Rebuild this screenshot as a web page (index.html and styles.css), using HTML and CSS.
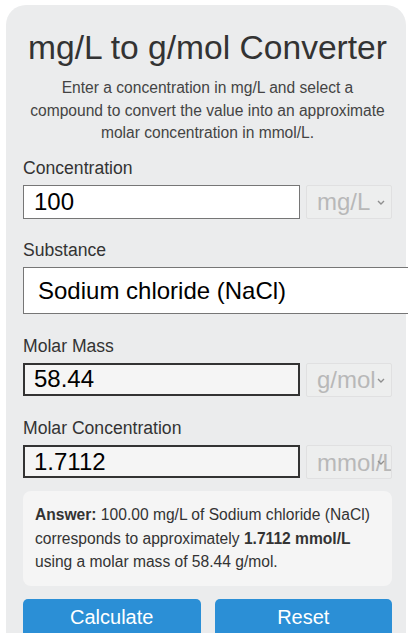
FILE: index.html
```html
<!DOCTYPE html>
<html lang="en">
<head>
<meta charset="UTF-8">
<meta name="viewport" content="width=device-width, initial-scale=1.0">
<title>mg/L to g/mol Converter</title>
<link rel="stylesheet" href="styles.css">
</head>
<body>
<div class="container">
    <h1>mg/L to g/mol Converter</h1>
    <p class="intro">Enter a concentration in mg/L and select a compound to convert the value into an approximate molar concentration in mmol/L.</p>

    <div class="field">
        <label for="concentration">Concentration</label>
        <div class="row">
            <input type="text" id="concentration" value="100">
            <div class="unit-wrap">
                <select class="unit" disabled><option>mg/L</option></select>
                <svg class="chev" width="8" height="5" viewBox="0 0 8 5"><path d="M1 1l3 3 3-3" fill="none" stroke="#8f8f8f" stroke-width="1.4"/></svg>
            </div>
        </div>
    </div>

    <div class="field">
        <label for="substance">Substance</label>
        <select id="substance" class="substance">
            <option>Sodium chloride (NaCl)</option>
            <option>Potassium chloride (KCl)</option>
            <option>Glucose (C6H12O6)</option>
        </select>
    </div>

    <div class="field">
        <label for="molarMass">Molar Mass</label>
        <div class="row">
            <input type="text" id="molarMass" class="readonly" value="58.44" readonly>
            <div class="unit-wrap">
                <select class="unit" disabled><option>g/mol</option></select>
                <svg class="chev" width="8" height="5" viewBox="0 0 8 5"><path d="M1 1l3 3 3-3" fill="none" stroke="#8f8f8f" stroke-width="1.4"/></svg>
            </div>
        </div>
    </div>

    <div class="field">
        <label for="molarConc">Molar Concentration</label>
        <div class="row">
            <input type="text" id="molarConc" class="readonly" value="1.7112" readonly>
            <div class="unit-wrap">
                <select class="unit" disabled><option>mmol/L</option></select>
                <svg class="chev" width="8" height="5" viewBox="0 0 8 5"><path d="M1 1l3 3 3-3" fill="none" stroke="#8f8f8f" stroke-width="1.4"/></svg>
            </div>
        </div>
    </div>

    <div class="answer">
        <p><strong>Answer:</strong> 100.00 mg/L of Sodium chloride (NaCl) corresponds to approximately <strong>1.7112 mmol/L</strong> using a molar mass of 58.44 g/mol.</p>
    </div>

    <div class="buttons">
        <button type="button">Calculate</button>
        <button type="button">Reset</button>
    </div>
</div>
</body>
</html>
```

FILE: styles.css
```css
html, body { overflow-x: hidden; }
body {
    margin: 0;
    background: #fff;
    font-family: "Liberation Sans", Arial, sans-serif;
    color: #333;
}
.container {
    box-sizing: border-box;
    width: 400px;
    margin: 5px 0 0 6px;
    padding: 24px 14px 40px 17px;
    background: #ebeced;
    border-radius: 20px;
}
h1 {
    margin: 0;
    font-size: 33.6px;
    font-weight: normal;
    text-align: center;
    color: #333;
}
.intro {
    margin: 10px 5px 0;
    font-size: 15.6px;
    line-height: 22.5px;
    text-align: center;
    color: #444;
}
.field { margin-top: 13px; }
.field + .field { margin-top: 21.5px; }
label {
    display: block;
    margin-bottom: 6px;
    font-size: 17.6px;
    color: #333;
}
.row { display: flex; gap: 6px; }
input {
    box-sizing: border-box;
    flex: 1;
    min-width: 0;
    height: 34px;
    padding: 0 10px;
    border: 1px solid #767676;
    background: #fff;
    font-family: inherit;
    font-size: 24px;
    color: #000;
}
input.readonly {
    height: 33px;
    border: 2px solid #333;
    background: #f5f5f5;
    padding: 0 9px;
}
.unit-wrap { position: relative; flex: 0 0 86px; }
.unit {
    box-sizing: border-box;
    width: 86px;
    height: 34px;
    padding: 0 0 0 10px;
    border: 1px solid #dcdcdc;
    border-radius: 2px;
    background: #efefef;
    font-family: inherit;
    font-size: 24px;
    color: #a3a3a3;
    appearance: none;
    -webkit-appearance: none;
}
.chev { position: absolute; right: 7px; top: 15px; }
.substance {
    box-sizing: border-box;
    width: 400px;
    height: 47px;
    padding: 0 10px;
    border: 1px solid #767676;
    background: #fff;
    font-family: inherit;
    font-size: 24px;
    color: #000;
}
.answer {
    margin-top: 12px;
    padding: 12px;
    background: #f5f5f5;
    border-radius: 8px;
    color: #333;
}
.answer p {
    margin: 0;
    font-size: 15.6px;
    line-height: 23.5px;
}
.buttons { display: flex; gap: 14px; margin-top: 13px; }
button {
    flex: 1;
    padding: 7px 0 12px;
    border: none;
    border-radius: 5px;
    background: #2b8fd6;
    color: #fff;
    font-family: inherit;
    font-size: 20px;
    line-height: 23px;
    cursor: pointer;
}
button:hover { background: #2479b8; }
```
